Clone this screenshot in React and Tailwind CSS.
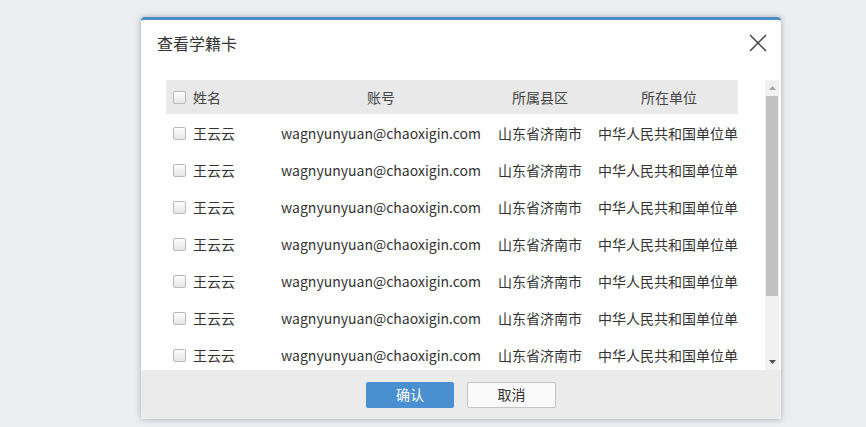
import React from "react";

const rows = Array.from({ length: 7 }).map(() => ({
  name: "王云云",
  account: "wagnyunyuan@chaoxigin.com",
  area: "山东省济南市",
  unit: "中华人民共和国单位单",
}));

const font = {
  fontFamily: '"Microsoft YaHei", "Noto Sans CJK SC", "Noto Sans", sans-serif',
};

function Checkbox() {
  return (
    <span className="inline-block w-[13px] h-[13px] rounded-[2px] border border-[#b9b9b9] bg-gradient-to-b from-[#fdfdfd] to-[#e6e6e6] shrink-0" />
  );
}

function Scrollbar() {
  return (
    <div className="w-[14px] h-full bg-[#f1f1f1] flex flex-col items-center">
      <div className="h-[16px] w-full flex items-center justify-center">
        <svg width="7" height="4" viewBox="0 0 7 4">
          <path d="M0 4 L3.5 0 L7 4 Z" fill="#a3a3a3" />
        </svg>
      </div>
      <div className="w-[12px] h-[200px] bg-[#c1c1c1]" />
      <div className="flex-1" />
      <div className="h-[16px] w-full flex items-center justify-center">
        <svg width="7" height="4" viewBox="0 0 7 4">
          <path d="M0 0 L7 0 L3.5 4 Z" fill="#505050" />
        </svg>
      </div>
    </div>
  );
}

export default function App() {
  return (
    <div className="w-full h-[427px] bg-[#ebedf1] overflow-hidden pl-[141px] pt-[17px]" style={font}>
      <div className="w-[640px] h-[402px] bg-white border-t-[3px] border-[#4a8cc8] rounded-t-[4px] shadow-[0_0_6px_rgba(0,0,0,0.28)] flex flex-col overflow-hidden">
        <div className="h-[46px] flex items-center justify-between pl-[16px] pr-[14px] shrink-0">
          <span className="text-[16px] text-[#333]">查看学籍卡</span>
          <svg width="18" height="18" viewBox="0 0 18 18">
            <path d="M1 1 L17 17 M17 1 L1 17" stroke="#444" strokeWidth="1.5" />
          </svg>
        </div>

        <div className="mt-[14px] h-[290px] flex pl-[25px] shrink-0">
          <div className="w-[572px] h-full overflow-hidden text-[14px] text-[#333]">
            <div className="grid grid-cols-[106px_218px_104px_144px] h-[34px] bg-[#e9e9e9] items-center text-[#444]">
              <div className="flex items-center gap-[7px] pl-[7px]">
                <Checkbox />
                <span>姓名</span>
              </div>
              <div className="text-center">账号</div>
              <div className="text-center pr-[4px]">所属县区</div>
              <div className="text-center pl-[6px]">所在单位</div>
            </div>
            {rows.map((r, i) => (
              <div
                key={i}
                className="grid grid-cols-[106px_218px_104px_144px] h-[37px] pt-[2px] items-center"
              >
                <div className="flex items-center gap-[7px] pl-[7px]">
                  <Checkbox />
                  <span>{r.name}</span>
                </div>
                <div className="text-center whitespace-nowrap">{r.account}</div>
                <div className="text-center whitespace-nowrap pr-[4px]">{r.area}</div>
                <div className="pl-[4px] whitespace-nowrap">{r.unit}</div>
              </div>
            ))}
          </div>
          <div className="w-[27px]" />
          <Scrollbar />
        </div>

        <div className="flex-1 bg-[#ebebeb] flex items-center justify-center gap-[13px] text-[14px]">
          <button className="w-[88px] h-[26px] rounded-[2px] bg-[#4a90d0] text-white">确认</button>
          <button className="w-[89px] h-[26px] rounded-[2px] bg-[#fafafa] border border-[#c4c4c4] text-[#333]">取消</button>
        </div>
      </div>
    </div>
  );
}
